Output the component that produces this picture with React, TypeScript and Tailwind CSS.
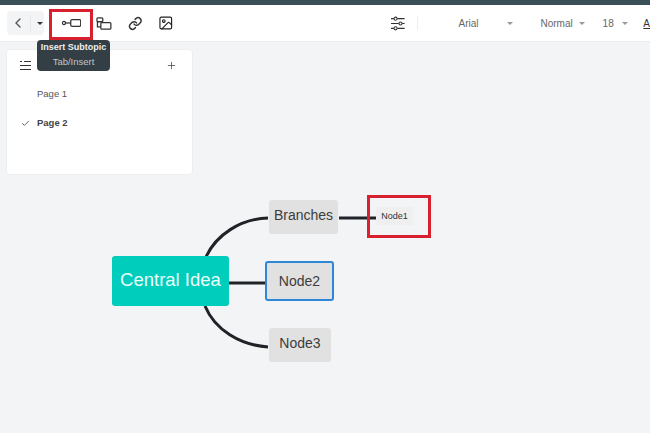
import { Check, ChevronLeft, Image, Plus } from 'lucide-react'

function Caret({ className }: { className: string }) {
  return <span className={`w-0 h-0 border-x-[3px] border-x-transparent border-t-[3px] ${className}`} />
}

function FontSelect({ label, width, gap }: { label: string; width: string; gap: string }) {
  return (
    <div className={`flex items-center ${width} ${gap} text-[10px] text-[#666]`}>
      <span>{label}</span>
      <Caret className="border-t-[#999]" />
    </div>
  )
}

export default function App() {
  return (
    <div className="relative w-[650px] h-[433px] overflow-hidden bg-[#f3f4f6] font-['Liberation_Sans',Arial,sans-serif]">
      <div className="h-[5px] bg-[#3b4f59]" />

      {/* Toolbar */}
      <div className="flex items-center h-[37px] bg-white pl-[7px] border-b border-[#eceef0]">
        <div className="flex items-center w-[38px] h-[24px] rounded bg-[#f3f4f6]">
          <ChevronLeft className="w-4 h-4 ml-[3px] text-[#555]" strokeWidth={2} />
          <div className="ml-[4px] w-px h-[16px] bg-[#e6e7e9]" />
          <Caret className="ml-[6px] border-t-[#333]" />
        </div>
        <svg className="ml-[18px] w-[20px] h-[10px]" viewBox="0 0 20 10" fill="none" stroke="#333" strokeWidth="1.3">
          <circle cx="2" cy="5" r="1.6" />
          <path d="M3.5 5H9" />
          <rect x="9" y="1.5" width="10.3" height="7" rx="1.5" />
        </svg>
        <svg className="ml-[15px] w-[16px] h-[13px]" viewBox="0 0 16 13" fill="none" stroke="#333" strokeWidth="1.3">
          <rect x="1" y="0.7" width="6" height="4" rx="1" />
          <path d="M1.5 4.7V10H5" />
          <rect x="5" y="5.5" width="10.3" height="6.8" rx="1" />
        </svg>
        <svg className="ml-[16px] w-[15px] h-[15px]" viewBox="0 0 24 24" fill="none" stroke="#333" strokeWidth="2.4" strokeLinecap="round" strokeLinejoin="round">
          <path d="M10 13a5 5 0 0 0 7.5.5l3-3a5 5 0 0 0-7-7l-1.8 1.7" />
          <path d="M14 11a5 5 0 0 0-7.5-.5l-3 3a5 5 0 0 0 7 7l1.7-1.7" />
        </svg>
        <Image className="ml-[16px] w-4 h-4 text-[#222]" strokeWidth={1.8} />
        <svg className="ml-[217px] w-[14px] h-[15px]" viewBox="0 0 14 15" fill="none" stroke="#333" strokeWidth="1.1">
          <path d="M0 2.5H3M6.5 2.5H14M0 7.5H8M11.5 7.5H14M0 12.5H3M6.5 12.5H14" />
          <circle cx="4.7" cy="2.5" r="1.6" />
          <circle cx="9.8" cy="7.5" r="1.6" />
          <circle cx="4.7" cy="12.5" r="1.6" />
        </svg>
        <div className="ml-[12px] w-px h-[14px] bg-[#eee]" />
        <div className="ml-[41px]"><FontSelect label="Arial" width="w-[82px]" gap="gap-[29px]" /></div>
        <FontSelect label="Normal" width="w-[64px]" gap="gap-[6px]" />
        <FontSelect label="18" width="w-[42px]" gap="gap-[8px]" />
        <span className="text-[10px] underline text-[#333]">A</span>
      </div>

      {/* Pages panel */}
      <div className="mt-[7px] ml-[6px] flex flex-col w-[187px] h-[126px] rounded-sm bg-white border border-[#eceef0]">
        <div className="flex items-center justify-between pl-[13px] pr-[15px] pt-[10px]">
          <svg className="w-[11px] h-[11px]" viewBox="0 0 11 11" fill="none" stroke="#333" strokeWidth="1">
            <path d="M0 1.5H2M4 1.5H11M0 5.5H11M0 9.5H11" />
          </svg>
          <Plus className="w-[11px] h-[11px] text-[#333]" strokeWidth={1.5} />
        </div>
        <div className="mt-[16px] pl-[30px] text-[9.5px] text-[#555]">Page 1</div>
        <div className="mt-[15px] flex items-center text-[9.5px] font-bold text-[#444]">
          <Check className="ml-[14px] w-[9px] h-[9px] text-[#333]" strokeWidth={2} />
          <span className="ml-[7px]">Page 2</span>
        </div>
      </div>

      {/* Tooltip */}
      <div className="absolute left-[37px] top-[40px] w-[73px] h-[31px] rounded-sm bg-[#333e45] text-center">
        <div className="mt-[1px] text-[9px] leading-[13px] font-bold text-[#eee]">Insert Subtopic</div>
        <div className="text-[9.5px] leading-[15px] text-[#c0c6c9]">Tab/Insert</div>
      </div>

      {/* Red highlight on toolbar */}
      <div className="absolute left-[49px] top-[9px] w-[44px] h-[31px] border-[3px] border-[#d9202e]" />

      {/* Mind map */}
      <svg className="absolute inset-0 w-[650px] h-[433px]" viewBox="0 0 650 433" fill="none" stroke="#1f2328" strokeWidth="3">
        <path d="M206 257C216 235 240 219 268 218" />
        <path d="M229 283H267" />
        <path d="M205 306C215 330 240 345 268 347" />
        <path d="M339 218H376" />
      </svg>

      <div className="absolute left-[112px] top-[256px] flex items-center justify-center w-[117px] h-[50px] pb-[3px] rounded-[3px] bg-[#00cdbb] text-[18.5px] text-[#ecfffb]">Central Idea</div>
      <div className="absolute left-[269px] top-[200px] flex items-center justify-center w-[69px] h-[34px] pb-[3px] rounded-[3px] bg-[#e1e1e1] text-[14px] text-[#3c3c3c]">Branches</div>
      <div className="absolute left-[265px] top-[261px] flex items-center justify-center w-[69px] h-[40px] rounded-[3px] border-2 border-[#2f86d6] bg-[#e1e1e1] text-[14px] text-[#3c3c3c]">Node2</div>
      <div className="absolute left-[269px] top-[328px] flex items-center justify-center w-[62px] h-[34px] pb-[3px] rounded-[3px] bg-[#e1e1e1] text-[14px] text-[#3c3c3c]">Node3</div>
      <div className="absolute left-[376px] top-[207px] flex items-center justify-center w-[37px] h-[18px] pt-[1px] rounded-[2px] bg-[#efefef] text-[9px] text-[#333]">Node1</div>
      <div className="absolute left-[367px] top-[195px] w-[64px] h-[43px] border-[3px] border-[#d9202e]" />
    </div>
  )
}
